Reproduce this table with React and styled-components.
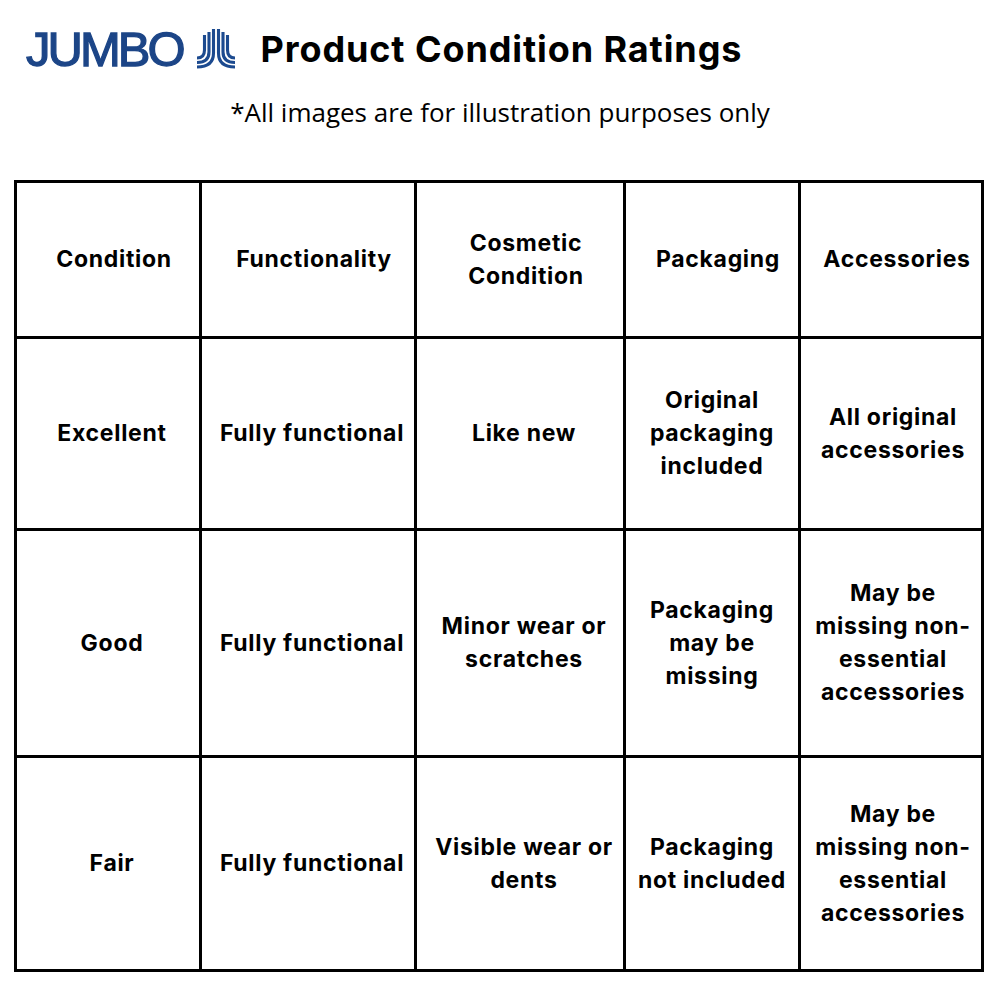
import React from "react";
import styled, { createGlobalStyle } from "styled-components";

const Global = createGlobalStyle`
  html, body { margin: 0; padding: 0; background: #fff; }
  body { font-family: "Inter", "Lato", sans-serif; color: #000; }
`;

const Page = styled.div`
  width: 1000px;
  height: 1000px;
  box-sizing: border-box;
  padding-top: 24px;
  display: flex;
  flex-direction: column;
`;

const Header = styled.div`
  display: flex;
  align-items: center;
  padding-left: 26px;
  height: 50px;
`;

const Brand = styled.div`
  font-family: "Liberation Sans", Arial, sans-serif;
  font-size: 49px;
  font-weight: 400;
  letter-spacing: -3px;
  color: #1c4587;
  -webkit-text-stroke: 1.3px #1c4587;
  line-height: 1;
`;

const Mark = styled.svg`
  width: 40px;
  height: 42px;
  margin-left: 13px;
`;

const Title = styled.h1`
  margin: 0 0 0 25px;
  font-family: "Inter", sans-serif;
  font-weight: 700;
  font-size: 36px;
  letter-spacing: 0.9px;
`;

const Note = styled.p`
  margin: 20px 0 0;
  text-align: center;
  font-family: "Open Sans", sans-serif;
  font-size: 26px;
  font-weight: 400;
  letter-spacing: 0px;
`;

const Table = styled.div`
  margin: 50px 0 0 14px;
  width: 970px;
  box-sizing: border-box;
  display: grid;
  grid-template-columns: 182px 212px 206px 172px 180px;
  grid-template-rows: 153px 189px 224px 211px;
  gap: 3px;
  padding: 3px;
  background: #000;
`;

const Cell = styled.div`
  background: #fff;
  display: flex;
  align-items: center;
  justify-content: center;
  text-align: center;
  box-sizing: border-box;
  padding: 0 2px 0 ${(p) => p.$shift}px;
  font-family: "Inter", sans-serif;
  font-weight: 700;
  font-size: 23px;
  line-height: 33px;
  letter-spacing: 0.7px;
`;

const headers = ["Condition", "Functionality", "Cosmetic\nCondition", "Packaging", "Accessories"];
const rows = [
  ["Excellent", "Fully functional", "Like new", "Original\npackaging\nincluded", "All original\naccessories"],
  ["Good", "Fully functional", "Minor wear or\nscratches", "Packaging\nmay be\nmissing", "May be\nmissing non-\nessential\naccessories"],
  ["Fair", "Fully functional", "Visible wear or\ndents", "Packaging\nnot included", "May be\nmissing non-\nessential\naccessories"],
];

const bodyShift = [10, 10, 10, 2, 6];

const Lines = ({ text }) =>
  text.split("\n").map((l, i) => (
    <React.Fragment key={i}>
      {i > 0 && <br />}
      {l}
    </React.Fragment>
  ));

export default function App() {
  return (
    <>
      <Global />
      <Page>
        <Header>
          <Brand>JUMBO</Brand>
          <Mark viewBox="0 0 40 42" fill="none" stroke="#1c4a8f" strokeWidth="3.1" strokeLinecap="butt">
            <path d="M17.5 1 V25 Q17.5 39 1 39" />
            <path d="M13 4 V24 Q13 34.5 1 34.5" />
            <path d="M8.5 7 V22 Q8.5 30 1 30" />
            <path d="M22.5 1 V25 Q22.5 39 39 39" />
            <path d="M27 4 V24 Q27 34.5 39 34.5" />
            <path d="M31.5 7 V22 Q31.5 30 39 30" />
          </Mark>
          <Title>Product Condition Ratings</Title>
        </Header>
        <Note>*All images are for illustration purposes only</Note>
        <Table>
          {headers.map((h, i) => (
            <Cell key={"h" + i} $shift={14}>
              <span><Lines text={h} /></span>
            </Cell>
          ))}
          {rows.flatMap((r, ri) =>
            r.map((c, ci) => (
              <Cell key={ri + "-" + ci} $shift={bodyShift[ci]}>
                <span><Lines text={c} /></span>
              </Cell>
            ))
          )}
        </Table>
      </Page>
    </>
  );
}
